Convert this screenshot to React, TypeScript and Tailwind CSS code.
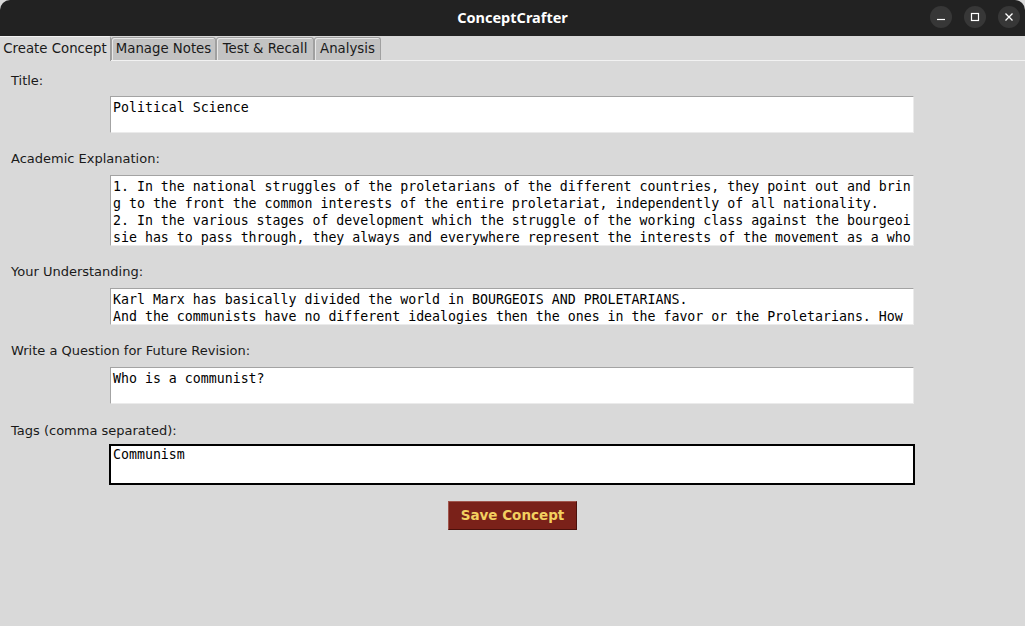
import React from 'react';

const mono = { fontFamily: '"DejaVu Sans Mono", "Liberation Mono", monospace' };

function TitleBar() {
  return (
    <div className="h-[36px] bg-[#222222] rounded-t-[10px] flex items-center relative">
      <div className="flex-1 text-center text-white font-bold text-[14.5px] font-['Noto_Sans',sans-serif]">
        ConceptCrafter
      </div>
      <div className="absolute right-[5px] top-[6px] flex gap-[12px]">
        <div className="w-[22px] h-[22px] rounded-full bg-[#373737] flex items-center justify-center">
          <svg width="10" height="10" viewBox="0 0 10 10">
            <line x1="1" y1="7.5" x2="9" y2="7.5" stroke="white" strokeWidth="1.2" />
          </svg>
        </div>
        <div className="w-[22px] h-[22px] rounded-full bg-[#373737] flex items-center justify-center">
          <svg width="10" height="10" viewBox="0 0 10 10">
            <rect x="1.5" y="1.5" width="7" height="7" fill="none" stroke="white" strokeWidth="1.2" />
          </svg>
        </div>
        <div className="w-[22px] h-[22px] rounded-full bg-[#373737] flex items-center justify-center">
          <svg width="10" height="10" viewBox="0 0 10 10">
            <path d="M1.5 1.5 L8.5 8.5 M8.5 1.5 L1.5 8.5" stroke="white" strokeWidth="1.3" />
          </svg>
        </div>
      </div>
    </div>
  );
}

const otherTabs = [
  { t: 'Manage Notes', w: 'w-[105px]' },
  { t: 'Test & Recall', w: 'w-[98px]' },
  { t: 'Analysis', w: 'w-[67px]' },
];

function Tabs() {
  return (
    <div className="h-[25px] flex items-end border-b border-[#f2f2f2] font-['DejaVu_Sans',sans-serif] text-[13.3px]">
      <div className="w-[111px] h-[25px] -mb-px bg-[#d9d9d9] border-t border-[#f2f2f2] border-r border-r-[#9c9c9c] rounded-tr-[2px] flex items-center justify-center text-[#1a1a1a]">
        Create Concept
      </div>
      {otherTabs.map(({ t, w }) => (
        <div
          key={t}
          className={`${w} h-[23px] bg-[#c3c3c3] border border-[#a0a0a0] border-b-0 rounded-t-[3px] flex items-center justify-center text-[#1a1a1a] shadow-[inset_1px_1px_0_#e8e8e8]`}
        >
          {t}
        </div>
      ))}
    </div>
  );
}

function Box({ lines, h, focused }: { lines: string[]; h: string; focused?: boolean }) {
  return (
    <div
      className={
        focused
          ? `ml-[98px] w-[806px] ${h} bg-white border-2 border-black pl-[2px] pt-0 overflow-hidden`
          : `ml-[99px] w-[804px] ${h} bg-white border border-t-[#a3a3a3] border-l-[#a3a3a3] border-b-[#ebebeb] border-r-[#ebebeb] pl-[2px] pt-[1.5px] overflow-hidden`
      }
      style={mono}
    >
      {lines.map((l, i) => (
        <div key={i} className="text-[13.25px] leading-[17px] text-black whitespace-pre">
          {l}
        </div>
      ))}
    </div>
  );
}

function Label({ children, mt }: { children: React.ReactNode; mt: string }) {
  return (
    <div className={`${mt} h-[20px] leading-[20px] text-[13px] text-[#1a1a1a] font-['DejaVu_Sans',sans-serif]`}>
      {children}
    </div>
  );
}

export default function App() {
  return (
    <div className="w-[1025px] h-[626px] bg-[#d9d9d9] overflow-hidden">
      <TitleBar />
      <Tabs />
      <div className="px-[11px]">
        <Label mt="mt-[10px]">Title:</Label>
        <div className="mt-[5px]">
          <Box h="h-[37px]" lines={['Political Science']} />
        </div>

        <Label mt="mt-[16px]">Academic Explanation:</Label>
        <div className="mt-[6px]">
          <Box
            h="h-[71px]"
            lines={[
              '1. In the national struggles of the proletarians of the different countries, they point out and brin',
              'g to the front the common interests of the entire proletariat, independently of all nationality.',
              '2. In the various stages of development which the struggle of the working class against the bourgeoi',
              'sie has to pass through, they always and everywhere represent the interests of the movement as a who',
            ]}
          />
        </div>

        <Label mt="mt-[16px]">Your Understanding:</Label>
        <div className="mt-[6px]">
          <Box
            h="h-[37px]"
            lines={[
              'Karl Marx has basically divided the world in BOURGEOIS AND PROLETARIANS.',
              'And the communists have no different idealogies then the ones in the favor or the Proletarians. How',
            ]}
          />
        </div>

        <Label mt="mt-[16px]">Write a Question for Future Revision:</Label>
        <div className="mt-[6px]">
          <Box h="h-[37px]" lines={['Who is a communist?']} />
        </div>

        <Label mt="mt-[17px]">Tags (comma separated):</Label>
        <div className="mt-[3px]">
          <Box h="h-[41px]" focused lines={['Communism']} />
        </div>

        <div className="mt-[16px] flex justify-center">
          <button className="w-[129px] h-[29px] bg-[#7a2119] border border-t-[#a0554c] border-l-[#a0554c] border-b-[#4a100b] border-r-[#4a100b] text-[#f3d060] font-bold text-[13.5px] font-['DejaVu_Sans',sans-serif]">
            Save Concept
          </button>
        </div>
      </div>
    </div>
  );
}
